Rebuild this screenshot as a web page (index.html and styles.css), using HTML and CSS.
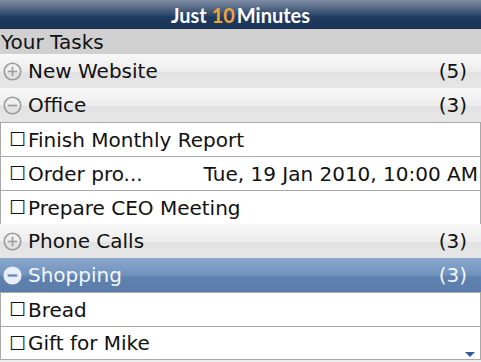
FILE: index.html
```html
<!DOCTYPE html>
<html lang="en">
<head>
    <meta charset="UTF-8">
    <title>Just 10 Minutes</title>
    <link rel="stylesheet" href="styles.css">
</head>
<body>
    <div class="titlebar">Just <span class="ten">10</span>Minutes</div>
    <div class="heading">Your Tasks</div>

    <div class="list">
        <div class="group">
            <span class="toggle"><svg width="19" height="19" viewBox="0 0 18 18"><circle cx="9" cy="9" r="7.8" fill="none" stroke="#9a9a9a" stroke-width="1.5"/><path d="M4.5 9h9M9 4.5v9" stroke="#9a9a9a" stroke-width="1.5"/></svg></span>
            <span class="name">New Website</span>
            <span class="count">(5)</span>
        </div>
        <div class="group">
            <span class="toggle"><svg width="19" height="19" viewBox="0 0 18 18"><circle cx="9" cy="9" r="7.8" fill="none" stroke="#9a9a9a" stroke-width="1.5"/><path d="M4.5 9h9" stroke="#9a9a9a" stroke-width="1.5"/></svg></span>
            <span class="name">Office</span>
            <span class="count">(3)</span>
        </div>
        <div class="task"><span class="box">☐</span><span class="name">Finish Monthly Report</span></div>
        <div class="task"><span class="box">☐</span><span class="name">Order pro...</span><span class="due">Tue, 19 Jan 2010, 10:00 AM</span></div>
        <div class="task"><span class="box">☐</span><span class="name">Prepare CEO Meeting</span></div>
        <div class="group">
            <span class="toggle"><svg width="19" height="19" viewBox="0 0 18 18"><circle cx="9" cy="9" r="7.8" fill="none" stroke="#9a9a9a" stroke-width="1.5"/><path d="M4.5 9h9M9 4.5v9" stroke="#9a9a9a" stroke-width="1.5"/></svg></span>
            <span class="name">Phone Calls</span>
            <span class="count">(3)</span>
        </div>
        <div class="group selected">
            <span class="toggle"><svg width="19" height="19" viewBox="0 0 18 18"><circle cx="9" cy="9" r="8.6" fill="#e8eef6"/><path d="M4.5 9h9" stroke="#5f81ad" stroke-width="2"/></svg></span>
            <span class="name">Shopping</span>
            <span class="count">(3)</span>
        </div>
        <div class="task"><span class="box">☐</span><span class="name">Bread</span></div>
        <div class="task last"><span class="box">☐</span><span class="name">Gift for Mike</span></div>
    </div>
    <div class="scroll-down"></div>
</body>
</html>
```

FILE: styles.css
```css
body {
    margin: 0;
    width: 481px;
    height: 362px;
    overflow: hidden;
    background: #ececec;
    font-family: 'DejaVu Sans', sans-serif;
    color: #111;
    position: relative;
}
.titlebar {
    height: 29px;
    line-height: 30px;
    text-align: center;
    color: #fff;
    font-family: Lato, 'DejaVu Sans', sans-serif;
    font-size: 20px;
    font-weight: bold;
    background: linear-gradient(#7f8ea4, #4a5f7e 35%, #1e3a5f 60%, #1b3557);
}
.titlebar .ten {
    color: #f0a43a;
    margin-right: 2px;
}
.heading {
    height: 25px;
    line-height: 27px;
    background: #d0d0d0;
    font-size: 20px;
    padding-left: 1px;
}
.group, .task {
    height: 34px;
    box-sizing: border-box;
    display: flex;
    align-items: center;
    font-size: 20px;
    white-space: nowrap;
}
.group {
    background: linear-gradient(#f8f8f8, #ededed 50%, #e2e2e2 55%, #e6e6e6);
    padding: 0 14px 0 3px;
}
.group .toggle {
    width: 19px;
    height: 19px;
    margin-right: 6px;
    display: flex;
}
.group .name {
    flex: 1;
}
.group.selected {
    background: linear-gradient(#8aa7cc, #7193bf 50%, #5f82b0 55%, #5a7ca9);
    color: #f4f6fa;
}
.task {
    background: #fff;
    border: 1px solid #a8a8a8;
    border-bottom: none;
    padding: 0 2px 0 8px;
}
.task.last {
    border-bottom: 1px solid #a8a8a8;
}
.task .box {
    width: 19px;
    font-size: 19px;
    line-height: 1;
}
.task .name {
    flex: 1;
}
.scroll-down {
    position: absolute;
    right: 6px;
    bottom: 5px;
    width: 0;
    height: 0;
    border-left: 5px solid transparent;
    border-right: 5px solid transparent;
    border-top: 5px solid #2f5d9c;
}
```
